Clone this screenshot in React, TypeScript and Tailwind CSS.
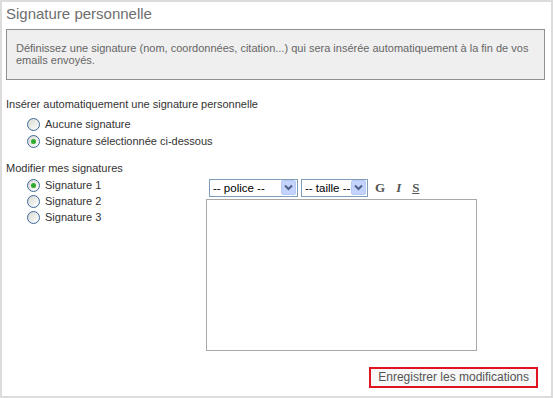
import { useState } from 'react'

function Radio({ checked, label, onClick }: { checked: boolean; label: string; onClick: () => void }) {
    return (
        <label onClick={onClick} className="flex items-center gap-[5px] h-[16px] cursor-pointer">
            <span className="w-[13px] h-[13px] rounded-full border border-[#3c6a98] bg-gradient-to-br from-[#d8d8d2] to-[#ffffff] flex items-center justify-center">
                {checked && <span className="w-[5px] h-[5px] rounded-full bg-[#2eaa2e]" />}
            </span>
            <span className="text-[#333]">{label}</span>
        </label>
    )
}

function Combo({ label, width }: { label: string; width: string }) {
    return (
        <div className={`flex items-center h-[18px] border border-[#7f9db9] bg-white overflow-hidden ${width}`}>
            <span className="flex-1 min-w-0 pl-[3px] text-[11.5px] text-black leading-[16px] whitespace-nowrap overflow-hidden">{label}</span>
            <span className="shrink-0 w-[15px] h-[15px] mr-[1px] rounded-[2px] bg-[#c3d3fd] border border-[#b7c9f2] flex items-center justify-center">
                <svg width="9" height="7" viewBox="0 0 9 7">
                    <path d="M1 1.5 L4.5 5 L8 1.5" fill="none" stroke="#4d6185" strokeWidth="2" />
                </svg>
            </span>
        </div>
    )
}

export default function App() {
    const [auto, setAuto] = useState<'none' | 'selected'>('selected')
    const [current, setCurrent] = useState(1)

    return (
        <div
            className="w-[553px] h-[398px] border-2 border-[#dcdcdc] bg-white px-[4px] text-[11px] leading-[13px] text-[#333] flex flex-col"
            style={{ fontFamily: '"Liberation Sans", Arial, sans-serif' }}
        >
            <h1 className="pt-[3px] text-[15px] leading-[18px] text-[#6e6e6e]">Signature personnelle</h1>

            <div className="mt-[6px] mr-[2px] border border-[#8f8f8f] bg-[#efefef] pl-[9px] pt-[12px] pb-[13px] text-[#666] leading-[12px]">
                Définissez une signature (nom, coordonnées, citation...) qui sera insérée automatiquement à la fin de vos
                <br />
                emails envoyés.
            </div>

            <div className="mt-[18px]">Insérer automatiquement une signature personnelle</div>
            <div className="pl-[21px] mt-[5px] flex flex-col gap-[1px]">
                <Radio checked={auto === 'none'} label="Aucune signature" onClick={() => setAuto('none')} />
                <Radio checked={auto === 'selected'} label="Signature sélectionnée ci-dessous" onClick={() => setAuto('selected')} />
            </div>

            <div className="mt-[13px]">Modifier mes signatures</div>
            <div className="flex">
                <div className="w-[200px] pl-[21px] pt-[2px] flex flex-col">
                    {[1, 2, 3].map(n => (
                        <Radio key={n} checked={current === n} label={`Signature ${n}`} onClick={() => setCurrent(n)} />
                    ))}
                </div>
                <div className="flex flex-col pt-[2px]">
                    <div className="flex items-center h-[20px] pl-[3px] pt-[1px]">
                        <Combo label="-- police --" width="w-[89px]" />
                        <div className="w-[3px]" />
                        <Combo label="-- taille --" width="w-[67px]" />
                        <div
                            className="flex items-center ml-[7px] gap-[11px] text-[13px] font-bold text-[#555]"
                            style={{ fontFamily: '"Liberation Serif", "Times New Roman", serif' }}
                        >
                            <span>G</span>
                            <span className="italic">I</span>
                            <span className="underline">S</span>
                        </div>
                    </div>
                    <textarea className="mt-[2px] w-[271px] h-[152px] border border-[#a9a9a9] bg-white resize-none outline-none" />
                </div>
            </div>

            <div className="flex justify-end pr-[9px] mt-[16px]">
                <button className="h-[21px] px-[7px] border-2 border-[#e0141e] bg-[#f7f7f7] text-[12px] text-[#555] leading-[15px]">
                    Enregistrer les modifications
                </button>
            </div>
        </div>
    )
}
